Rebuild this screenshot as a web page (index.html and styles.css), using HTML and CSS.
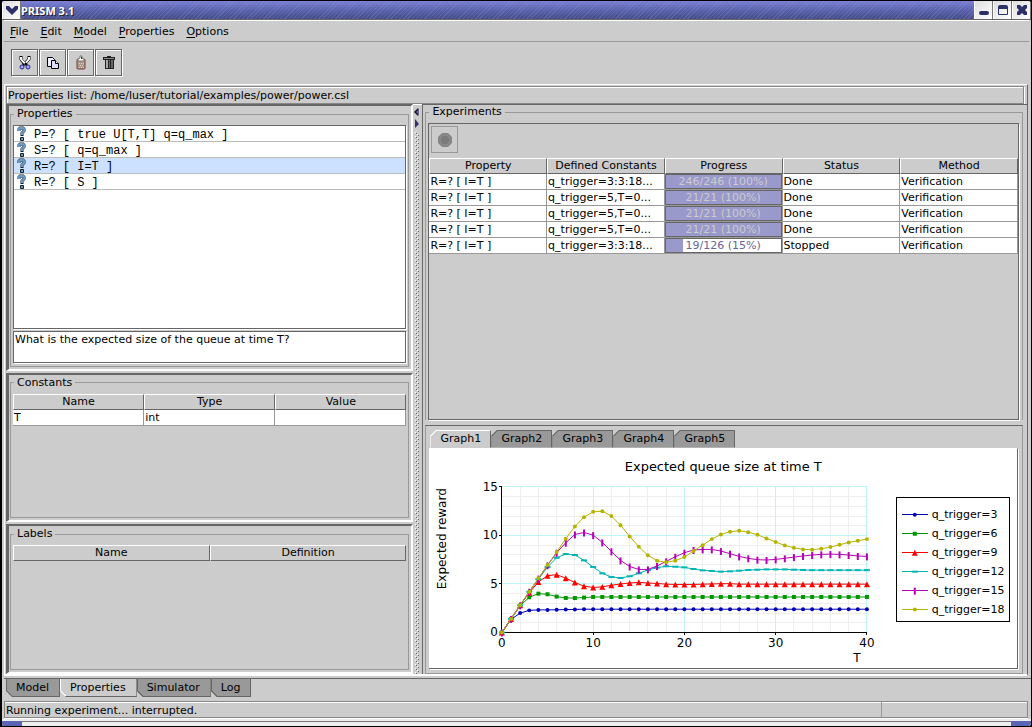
FILE: index.html
```html
<!DOCTYPE html>
<html lang="en">
<head>
<meta charset="utf-8">
<title>PRISM 3.1</title>
<link rel="stylesheet" href="styles.css">
</head>
<body>
<div class="window">
  <header class="titlebar">
    <button class="wm-button" aria-label="Window menu"><svg width="14" height="14" viewBox="0 0 14 14"><path d="M1 3h3l3 3 3-3h3v3L7 12 1 6z" fill="#2c3068"/></svg></button>
    <h1 class="title">PRISM 3.1</h1>
    <button class="wm-button" aria-label="Minimize"><svg width="14" height="14" viewBox="0 0 14 14"><rect x="2" y="8" width="10" height="4" rx="2" fill="#2c3068"/></svg></button>
    <button class="wm-button" aria-label="Maximize"><svg width="14" height="14" viewBox="0 0 14 14"><path d="M2 4a2 2 0 0 1 2-2h6a2 2 0 0 1 2 2v7a1 1 0 0 1-1 1H3a1 1 0 0 1-1-1zM3 6v5h8V6z" fill="#2c3068" fill-rule="evenodd"/></svg></button>
    <button class="wm-button" aria-label="Close"><svg width="14" height="14" viewBox="0 0 14 14"><path d="M2 2h3l2 2 2-2h3v3l-2 2 2 2v3H9l-2-2-2 2H2V9l2-2-2-2z" fill="#2c3068"/></svg></button>
  </header>

  <nav class="menubar">
    <button class="menu"><u>F</u>ile</button>
    <button class="menu"><u>E</u>dit</button>
    <button class="menu"><u>M</u>odel</button>
    <button class="menu"><u>P</u>roperties</button>
    <button class="menu"><u>O</u>ptions</button>
  </nav>

  <div class="toolbar">
    <button class="tool" aria-label="Cut"><svg width="16" height="16" viewBox="0 0 16 16" fill="none"><path d="M4 1v3l4 6M12 1v3L7 10" stroke="#000" stroke-width="3"/><path d="M4 2v2l4 5M12 2v2L8 9" stroke="#fff" stroke-width="2"/><path d="M8 8l2 2M7 9l-1 1" stroke="#000" stroke-width="2"/><circle cx="5" cy="12" r="2" fill="#aaf" stroke="#22298c"/><circle cx="11" cy="12" r="2" fill="#aaf" stroke="#22298c"/></svg></button>
    <button class="tool" aria-label="Copy"><svg width="16" height="16" viewBox="0 0 16 16" stroke="#000"><path d="M2.500 2.500h5l2 2v7h-7z" fill="#eef"/><path d="M6.500 5.500h4l3 3v5h-7z" fill="#ddf"/><path d="M10.500 5.500v3h3" fill="#fff"/></svg></button>
    <button class="tool" aria-label="Paste"><svg width="16" height="16" viewBox="0 0 16 16"><rect x="4" y="4" width="8" height="10" rx="1" fill="#aa9c8c" stroke="#803838"/><path d="M5 6V4l2-1V1h2v2l2 1v2z" fill="#fff" stroke="#777"/><path d="M8 2h1v2H8z" fill="#333"/><path d="M6 8h1v1H6zm2 0h1v1H8zm2 0h1v1h-1zM7 10h1v1H7zm2 0h1v1H9zm-3 2h1v1H6zm2 0h1v1H8zm2 0h1v1h-1z" fill="#ddd0b8"/></svg></button>
    <button class="tool" aria-label="Delete"><svg width="16" height="16" viewBox="0 0 16 16"><path d="M6 1h4v1h4v3h-1v9H4V5H2V2h4z" fill="#222"/><path d="M3 3h10v1H3z" fill="#888"/><path d="M5 5h2v8H5z" fill="#aaa"/><path d="M8 5h1v8H8zm2 0h2v8h-2z" fill="#666"/></svg></button>
  </div>

  <main class="workspace">
    <div class="pathbar">Properties list: /home/luser/tutorial/examples/power/power.csl</div>
    <div class="split">
      <div class="left">
        <section class="pane pane-properties">
          <fieldset class="group">
            <legend>Properties</legend>
            <ul class="prop-list">
              <li><svg class="q" viewBox="0 0 10 15"><use href="#question"/></svg>P=? [ true U[T,T] q=q_max ]</li>
              <li><svg class="q" viewBox="0 0 10 15"><use href="#question"/></svg>S=? [ q=q_max ]</li>
              <li class="selected"><svg class="q" viewBox="0 0 10 15"><use href="#question"/></svg>R=? [ I=T ]</li>
              <li><svg class="q" viewBox="0 0 10 15"><use href="#question"/></svg>R=? [ S ]</li>
            </ul>
            <textarea class="comment" aria-label="Property comment">What is the expected size of the queue at time T?</textarea>
          </fieldset>
        </section>
        <section class="pane pane-small">
          <fieldset class="group spaced">
            <legend>Constants</legend>
            <table class="grid">
              <thead><tr><th>Name</th><th>Type</th><th>Value</th></tr></thead>
              <tbody><tr><td>T</td><td>int</td><td></td></tr></tbody>
            </table>
          </fieldset>
        </section>
        <section class="pane pane-small">
          <fieldset class="group spaced">
            <legend>Labels</legend>
            <table class="grid">
              <thead><tr><th>Name</th><th>Definition</th></tr></thead>
            </table>
          </fieldset>
        </section>
      </div>

      <div class="divider">
        <svg width="9" height="24" viewBox="0 0 9 24"><path d="M6 4v8L2 8z" fill="#669"/><path d="M1 8l4-4v2L3 8l2 2v2z" fill="#112"/><path d="M2 15v9l4-4z" fill="#336"/></svg>
        <svg class="bumps"><defs><pattern id="bump" width="4" height="4" patternUnits="userSpaceOnUse"><path d="M0 0h1v1H0zM2 2h1v1H2z" fill="#fff"/><path d="M1 1h1v1H1zM3 3h1v1H3z" fill="#666"/></pattern></defs><rect width="100%" height="100%" fill="url(#bump)"/></svg>
      </div>

      <div class="right">
        <fieldset class="group experiments">
          <legend>Experiments</legend>
          <div class="exp-box">
            <button class="stop" aria-label="Stop experiment" disabled><svg width="16" height="16" viewBox="0 0 16 16"><path d="M5 1h6l4 4v6l-4 4H5l-4-4V5z" fill="#858585"/><circle cx="8" cy="8" r="5" fill="#7b7b7b" stroke="#919191"/></svg></button>
            <table class="grid">
              <thead><tr><th>Property</th><th>Defined Constants</th><th>Progress</th><th>Status</th><th>Method</th></tr></thead>
              <tbody>
                <tr><td>R=? [ I=T ]</td><td>q_trigger=3:3:18...</td><td class="bar-cell"><div class="bar"><div class="fill" style="width:100%"></div><span>246/246 (100%)</span></div></td><td>Done</td><td>Verification</td></tr>
                <tr><td>R=? [ I=T ]</td><td>q_trigger=5,T=0...</td><td class="bar-cell"><div class="bar"><div class="fill" style="width:100%"></div><span>21/21 (100%)</span></div></td><td>Done</td><td>Verification</td></tr>
                <tr><td>R=? [ I=T ]</td><td>q_trigger=5,T=0...</td><td class="bar-cell"><div class="bar"><div class="fill" style="width:100%"></div><span>21/21 (100%)</span></div></td><td>Done</td><td>Verification</td></tr>
                <tr><td>R=? [ I=T ]</td><td>q_trigger=5,T=0...</td><td class="bar-cell"><div class="bar"><div class="fill" style="width:100%"></div><span>21/21 (100%)</span></div></td><td>Done</td><td>Verification</td></tr>
                <tr><td>R=? [ I=T ]</td><td>q_trigger=3:3:18...</td><td class="bar-cell"><div class="bar partial"><div class="fill" style="width:15%"></div><span>19/126 (15%)</span></div></td><td>Stopped</td><td>Verification</td></tr>
              </tbody>
            </table>
          </div>
        </fieldset>
        <section class="graphs">
          <div class="graph-tabs" role="tablist">
            <button class="tab top active" role="tab" aria-selected="true">Graph1</button>
            <button class="tab top" role="tab">Graph2</button>
            <button class="tab top" role="tab">Graph3</button>
            <button class="tab top" role="tab">Graph4</button>
            <button class="tab top" role="tab">Graph5</button>
          </div>
          <div class="chart-box">
            <svg class="chart" id="chart" viewBox="0 0 587 220" role="img" aria-label="Expected queue size at time T"></svg>
          </div>
        </section>
      </div>
    </div>
  </main>

  <div class="main-tabs" role="tablist">
    <button class="tab bottom" role="tab">Model</button>
    <button class="tab bottom active" role="tab" aria-selected="true">Properties</button>
    <button class="tab bottom" role="tab">Simulator</button>
    <button class="tab bottom" role="tab">Log</button>
  </div>
  <footer class="status"><span class="status-text">Running experiment... interrupted.</span><span class="status-box"></span></footer>
  <div class="frame-bottom"></div>
</div>

<svg class="defs" width="0" height="0">
  <symbol id="question" viewBox="0 0 10 15">
    <path d="M2 5V3l1-1h3l1 1v2L5 7v3" fill="none" stroke="#10202c" stroke-width="3"/>
    <path d="M2 5V3l1-1h3l1 1v2L5 7v2" fill="none" stroke="#6a9cc8" stroke-width="2"/>
    <rect x="3" y="11" width="4" height="4" rx="1" fill="#10202c"/>
    <rect x="4" y="12" width="2" height="2" fill="#6a9cc8"/>
  </symbol>
</svg>
<script src="chart.js"></script>
</body>
</html>
```
FILE: styles.css
```css
* { box-sizing: border-box; }
body {
  margin: 0;
  height: 100vh;
  background: #000;
  color: #000;
  font: 11px/14px "DejaVu Sans", sans-serif;
}
button { font: inherit; color: inherit; margin: 0; padding: 0; border: 0; background: none; }
svg { display: block; }
.defs { position: absolute; }

.window {
  display: flex;
  flex-direction: column;
  height: 100vh;
  background: #ccc;
  border: solid #000;
  border-width: 1px 1px 1px 2px;
  border-radius: 4px;
  overflow: hidden;
}

.titlebar {
  display: flex;
  height: 19px;
  flex: none;
  border-bottom: 1px solid #666;
  background:
    repeating-linear-gradient(135deg, transparent 0 2px, #8c96d040 2px 3px),
    linear-gradient(#7b7fd6, #5a62ae 50%, #454b86);
}
.title {
  flex: 1;
  margin: 0;
  padding-left: 0;
  font: bold 11px/20px "Noto Sans", sans-serif;
  color: #fff;
  text-shadow: 1px 1px 0 #223;
}
.wm-button {
  display: grid;
  place-items: center;
  width: 19px;
  border-right: 1px solid #777;
  border-left: 1px solid #fff;
  background: linear-gradient(135deg, #ddd, #fff);
}

.menubar {
  display: flex;
  gap: 12px;
  flex: none;
  height: 22px;
  padding: 3px 6px;
  margin: 0 2px;
  border-top: 1px solid #fff;
  border-bottom: 1px solid #999;
}
.menu { line-height: 15px; }
.menu u { text-underline-offset: 2px; }

.toolbar { display: flex; gap: 1px; flex: none; padding: 7px 9px 8px; }
.tool {
  display: grid;
  place-items: center;
  width: 27px;
  height: 27px;
  border: 1px solid #666;
  box-shadow: 1px 1px 0 #fff, inset 1px 1px 0 #fff;
}

.workspace {
  display: flex;
  flex-direction: column;
  flex: 1;
  min-height: 0;
  margin: 0 3px 0 2px;
  padding-left: 1px;
  border-top: 1px solid #fff;
  border-left: 1px solid #fff;
  border-right: 1px solid #666;
  border-bottom: 2px solid #fff;
}
.pathbar {
  flex: none;
  margin: 1px 3px 0 0;
  padding: 2px 1px 0;
  border: 1px solid #888;
  box-shadow: 1px 1px 0 #fff, inset 1px 1px 0 #fff;
}

.split {
  display: grid;
  grid-template-columns: minmax(0, 407fr) 9px minmax(0, 604fr);
  flex: 1;
  min-height: 0;
}
.left { display: flex; flex-direction: column; gap: 2px; min-height: 0; }
.pane {
  display: flex;
  flex: 150 0 0;
  min-height: 0;
  padding: 1px 2px 2px 1px;
  border: solid;
  border-width: 2px 2px 2px 3px;
  border-color: #666 #fff #fff #666;
}
.pane-properties { flex-grow: 273; }

.group {
  display: flex;
  flex-direction: column;
  flex: 1;
  min-width: 0;
  min-height: 0;
  margin: 0;
  padding: 4px 2px 3px;
  border: 1px solid #999;
}
.group legend { margin-left: 1px; padding: 0 3px; line-height: 14px; }
.spaced { padding-top: 4px; }

.prop-list {
  flex: 1;
  min-height: 0;
  margin: 0 0 2px;
  padding: 0;
  list-style: none;
  background: #fff;
  border: 1px solid #666;
  box-shadow: 1px 1px 0 #fff;
  font: 12px/18px "Liberation Mono", monospace;
}
.prop-list li {
  display: flex;
  gap: 7px;
  height: 16px;
  padding-left: 3px;
  border-bottom: 1px solid #bbb;
  white-space: nowrap;
}
.prop-list .selected { background: #cce0ff; }
.q { width: 10px; height: 15px; }
.comment {
  flex: none;
  height: 32px;
  margin: 0;
  padding: 1px;
  resize: none;
  border: 1px solid #666;
  box-shadow: 1px 1px 0 #fff;
  font: inherit;
  color: inherit;
  overflow: hidden;
}

.grid { width: 100%; table-layout: fixed; border-spacing: 0; }
.grid th {
  height: 16px;
  padding: 0;
  font-weight: normal;
  line-height: 14px;
  border: 1px solid;
  border-color: #fff #666 #666 #fff;
  white-space: nowrap;
}
.grid td {
  height: 16px;
  padding: 0 1px;
  line-height: 15px;
  background: #fff;
  border-right: 1px solid #999;
  border-bottom: 1px solid #999;
  white-space: nowrap;
  overflow: hidden;
}
.grid .bar-cell { padding: 0; }
.bar {
  display: grid;
  height: 15px;
  border: 1px solid #666;
  color: #ccc;
  line-height: 13px;
  text-align: center;
}
.bar > * { grid-area: 1 / 1; }
.fill { background: #99c; }
.partial { color: #669; }

.divider { display: flex; flex-direction: column; overflow: hidden; min-height: 0; }
.bumps { flex: 1; min-height: 0; width: 4px; margin: 4px 0 0 2px; }

.right {
  display: flex;
  flex-direction: column;
  min-width: 0;
  min-height: 0;
  padding: 0 4px 0 2px;
  border-left: 1px solid #666;
  border-top: 1px solid #666;
}
.experiments { flex: 322 0 0; padding: 4px 3px 0 2px; border-bottom: 0; }
.exp-box {
  flex: 1;
  min-height: 0;
  border: 1px solid #666;
  box-shadow: 1px 1px 0 #fff;
}
.stop {
  display: grid;
  place-items: center;
  width: 27px;
  height: 27px;
  margin: 2px 2px 5px;
  border: 1px solid #999;
}
.graphs {
  display: flex;
  flex-direction: column;
  flex: 249 0 0;
  min-height: 0;
  margin: 5px 0 0;
  padding: 4px 4px 4px 3px;
  border: 1px solid #999;
  border-top-color: #666;
}
.graph-tabs { display: flex; flex: none; padding-left: 1px; }
.chart-box {
  flex: 1;
  min-height: 0;
  background: #fff;
  border-top: 1px solid #fff;
  border-right: 1px solid #666;
  border-bottom: 1px solid #666;
  box-shadow: 1px 1px 0 #fff;
}
.chart { width: 100%; height: 100%; }

.tab { height: 18px; line-height: 16px; background-origin: border-box; white-space: nowrap; }
.top {
  width: 61px;
  border: solid #666;
  border-width: 1px 1px 0 1px;
  clip-path: polygon(6px 0, 100% 0, 100% 100%, 0 100%, 0 6px);
  background-image: linear-gradient(135deg, #666 5px, #999 5px);
}
.top.active {
  border-color: #fff #666 #fff #fff;
  background-image: linear-gradient(135deg, #fff 5px, #ccc 5px);
}
.main-tabs {
  display: flex;
  flex: none;
  margin: 2px 0 0 2px;
  padding-left: 2px;
  border-top: 1px solid #666;
}
.bottom {
  padding: 0 10px 0 9px;
  line-height: 17px;
  border: solid #666;
  border-width: 0 1px 1px 1px;
  clip-path: polygon(0 0, 100% 0, 100% 100%, 6px 100%, 0 calc(100% - 6px));
  background-image: linear-gradient(45deg, #666 5px, #999 5px);
}
.bottom.active { background-image: linear-gradient(45deg, #fff 5px, #ccc 5px); border-left-color: #fff; }

.status {
  display: flex;
  flex: none;
  height: 17px;
  margin: 4px 3px 0 2px;
  border: 1px solid #888;
  box-shadow: 0 1px 0 #fff, inset 0 1px 0 #fff;
}
.status-text { flex: 1; padding-left: 1px; line-height: 17px; }
.status-box { width: 146px; border-left: 1px solid #999; }
.frame-bottom {
  flex: none;
  height: 7px;
  margin-top: 1px;
  border-top: 2px solid #eee;
  background: linear-gradient(90deg, #5a66b4 20px, transparent 20px calc(100% - 20px), #5a66b4 calc(100% - 20px)), linear-gradient(#777 1px, #eee 1px);
}

.chart text { font-family: "DejaVu Sans", sans-serif; fill: #000; }
.chart .heading { font-size: 13px; }
.chart .tick { font-size: 12px; }
.chart .key { font-size: 11px; }
```
FILE: chart.js
```js
(() => {
// Expected queue size for T = 0..40; each list holds its last value to the end.
const series = [
  { name: "q_trigger=3", color: "#0000b4", mark: "dot", data: [0, 1.35, 2, 2.28, 2.33, 2.33, 2.34, 2.36, 2.38, 2.4] },
  { name: "q_trigger=6", color: "#009600", mark: "square", data: [0, 1.4, 2.75, 3.63, 4, 3.94, 3.7, 3.56, 3.55, 3.6, 3.66] },
  { name: "q_trigger=9", color: "#ff0000", mark: "triangle", data: [0, 1.4, 2.8, 4.1, 5.2, 5.85, 5.96, 5.6, 5.15, 4.77, 4.64, 4.7, 4.87, 5, 5.1, 5.17, 5.1, 5.05, 4.98, 4.95, 4.95, 4.95, 4.98, 5, 5.03, 5.03, 4.98] },
  { name: "q_trigger=12", color: "#00b4b4", mark: "dash", data: [0, 1.4, 2.8, 4.2, 5.5, 6.75, 7.7, 8.08, 7.98, 7.43, 6.75, 6.1, 5.72, 5.62, 5.79, 6.1, 6.44, 6.68, 6.82, 6.78, 6.71, 6.54, 6.4, 6.34, 6.27, 6.3, 6.37, 6.44, 6.47, 6.5, 6.5, 6.5, 6.47, 6.44, 6.42] },
  { name: "q_trigger=15", color: "#b400b4", mark: "bar", data: [0, 1.4, 2.8, 4.2, 5.55, 6.92, 8.22, 9.25, 10.1, 10.3, 10.03, 9.28, 8.36, 7.43, 6.8, 6.5, 6.5, 6.85, 7.33, 7.8, 8.22, 8.5, 8.56, 8.56, 8.39, 8.12, 7.84, 7.64, 7.5, 7.47, 7.53, 7.64, 7.77, 7.88, 7.98, 8.05, 8.08, 8.05, 7.98, 7.88, 7.84] },
  { name: "q_trigger=18", color: "#b4b400", mark: "dot", data: [0, 1.4, 2.8, 4.2, 5.58, 6.95, 8.29, 9.66, 10.92, 11.88, 12.43, 12.5, 11.99, 11.06, 9.9, 8.84, 7.95, 7.4, 7.23, 7.4, 7.77, 8.39, 9, 9.62, 10.1, 10.38, 10.48, 10.34, 10.07, 9.69, 9.32, 8.97, 8.73, 8.56, 8.53, 8.63, 8.8, 9.04, 9.28, 9.45, 9.62] }
];

const left = 72, right = 438, top = 38, bottom = 184;
const px = t => left + (right - left) * t / 40;
const py = v => bottom - (bottom - top) * v / 15;
const line = (x1, y1, x2, y2, c) =>
  `<path d="M${x1} ${y1}L${x2} ${y2}" stroke="${c}" shape-rendering="crispEdges"/>`;
const text = (x, y, s, cls, anchor = "middle") =>
  `<text x="${x}" y="${y}" class="${cls}" text-anchor="${anchor}">${s}</text>`;

function mark(kind, x, y, c) {
  const shapes = {
    dot: `<circle cx="${x}" cy="${y}" r="2" fill="${c}"/>`,
    square: `<rect x="${x - 2}" y="${y - 2}" width="4" height="4" fill="${c}"/>`,
    triangle: `<path d="M${x} ${y - 3}l3 6h-6z" fill="${c}"/>`,
    dash: `<rect x="${x - 3}" y="${y - 1}" width="6" height="2" fill="${c}"/>`,
    bar: `<rect x="${x - 1}" y="${y - 3}" width="2" height="7" fill="${c}"/>`
  };
  return shapes[kind];
}

let out = "";
for (let t = 2; t <= 40; t += 2) if (t % 10) out += line(px(t), top, px(t), bottom, "#eee");
for (let v = 1; v < 15; v++) if (v % 5) out += line(left, py(v), right, py(v), "#eee");
for (let t = 10; t <= 40; t += 10) out += line(px(t), top, px(t), bottom, "#c0f4fa");
for (let v = 5; v <= 15; v += 5) out += line(left, py(v), right, py(v), "#c0f4fa");
out += line(left, top, left, bottom + 3, "#000") + line(left - 3, bottom, right, bottom, "#000");
for (let v = 0; v <= 15; v += 5) out += line(left - 3, py(v), left, py(v), "#000") + text(left - 4, py(v) + 4, v, "tick", "end");
for (let t = 0; t <= 40; t += 10) out += line(px(t), bottom, px(t), bottom + 3, "#000") + text(px(t), bottom + 15, t, "tick");

for (const s of series) {
  const pts = Array.from({ length: 41 }, (_, t) => [px(t), py(s.data[Math.min(t, s.data.length - 1)])]);
  out += `<polyline points="${pts.join(" ")}" fill="none" stroke="${s.color}"/>`;
  out += pts.map(([x, y]) => mark(s.mark, x, y, s.color)).join("");
}

out += text(294, 22, "Expected queue size at time T", "heading");
out += text(428, 214, "T", "tick");
out += `<text class="tick" text-anchor="middle" transform="translate(16 90) rotate(-90)">Expected reward</text>`;

out += `<rect x="468" y="49" width="113" height="124" fill="#fff" stroke="#000" shape-rendering="crispEdges"/>`;
series.forEach((s, i) => {
  const y = 66 + i * 19;
  out += line(473, y, 499, y, s.color) + mark(s.mark, 486, y, s.color) + text(503, y + 3, s.name, "key", "start");
});
document.getElementById("chart").innerHTML = out;
})();
```
